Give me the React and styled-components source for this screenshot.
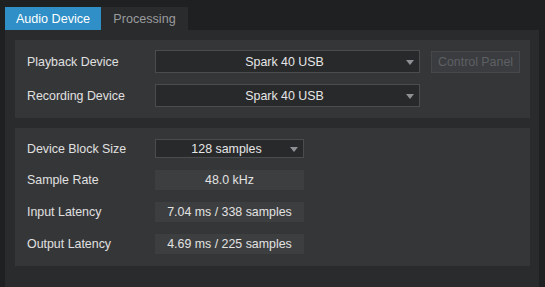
import React from "react";
import styled, { createGlobalStyle } from "styled-components";

const GlobalStyle = createGlobalStyle`
  html, body {
    margin: 0;
    padding: 0;
    background: #1f2022;
  }
  body {
    font-family: "Liberation Sans", Arial, sans-serif;
    font-size: 12.4px;
    color: #e2e2e2;
  }
`;

const Window = styled.div`
  width: 545px;
  height: 287px;
  background: #1f2022;
  padding: 7px 6px 0 5px;
  box-sizing: border-box;
  display: flex;
  flex-direction: column;
`;

const TabBar = styled.div`
  display: flex;
  height: 23px;
`;

const Tab = styled.div`
  display: flex;
  align-items: center;
  justify-content: center;
  width: ${(p) => p.$width}px;
  background: ${(p) => (p.$active ? "#2f8fc6" : "#2a2b2d")};
  color: ${(p) => (p.$active ? "#ffffff" : "#9a9b9d")};
  font-size: 12.6px;
`;

const Panel = styled.div`
  flex: 1;
  background: #2a2b2d;
  padding: 10px 9px 0 10px;
  display: flex;
  flex-direction: column;
  gap: 10px;
`;

const Group = styled.div`
  background: #353638;
  height: ${(p) => p.$height}px;
  box-sizing: border-box;
  padding: ${(p) => p.$pad};
  display: flex;
  flex-direction: column;
  gap: ${(p) => p.$gap}px;
`;

const Row = styled.div`
  display: flex;
  align-items: center;
  height: ${(p) => p.$height}px;
`;

const Label = styled.div`
  width: 128px;
  padding-left: 12px;
  color: #e0e0e0;
`;

const Select = styled.div`
  position: relative;
  width: ${(p) => p.$width}px;
  height: ${(p) => p.$height}px;
  box-sizing: border-box;
  background: #28292b;
  border: 1px solid #4b4c4f;
  display: flex;
  align-items: center;
  justify-content: center;
  color: #e6e6e6;
  padding-right: 6px;
`;

const Arrow = styled.span`
  position: absolute;
  right: 5px;
  top: 50%;
  margin-top: -2px;
  width: 0;
  height: 0;
  border-left: 4.5px solid transparent;
  border-right: 4.5px solid transparent;
  border-top: 5px solid #8f9093;
`;

const Field = styled.div`
  width: 149px;
  height: 20px;
  background: #3d3e40;
  display: flex;
  align-items: center;
  justify-content: center;
  color: #e2e2e2;
`;

const Button = styled.div`
  margin-left: 11px;
  width: 89px;
  height: 22px;
  box-sizing: border-box;
  background: #3a3c3f;
  border: 1px solid #46484b;
  color: #5e6064;
  display: flex;
  align-items: center;
  justify-content: center;
`;

function Dropdown({ value, width, height }) {
  return (
    <Select $width={width} $height={height}>
      {value}
      <Arrow />
    </Select>
  );
}

export default function App() {
  return (
    <>
      <GlobalStyle />
      <Window>
        <TabBar>
          <Tab $active $width={96}>Audio Device</Tab>
          <Tab $width={87}>Processing</Tab>
        </TabBar>
        <Panel>
          <Group $height={78} $pad="10px 0 0 0" $gap={11}>
            <Row $height={23}>
              <Label>Playback Device</Label>
              <Dropdown value="Spark 40 USB" width={265} height={23} />
              <Button>Control Panel</Button>
            </Row>
            <Row $height={23}>
              <Label>Recording Device</Label>
              <Dropdown value="Spark 40 USB" width={265} height={23} />
            </Row>
          </Group>
          <Group $height={138} $pad="11px 0 0 0" $gap={12}>
            <Row $height={19}>
              <Label>Device Block Size</Label>
              <Dropdown value="128 samples" width={149} height={19} />
            </Row>
            <Row $height={20}>
              <Label>Sample Rate</Label>
              <Field>48.0 kHz</Field>
            </Row>
            <Row $height={20}>
              <Label>Input Latency</Label>
              <Field>7.04 ms / 338 samples</Field>
            </Row>
            <Row $height={20}>
              <Label>Output Latency</Label>
              <Field>4.69 ms / 225 samples</Field>
            </Row>
          </Group>
        </Panel>
      </Window>
    </>
  );
}
